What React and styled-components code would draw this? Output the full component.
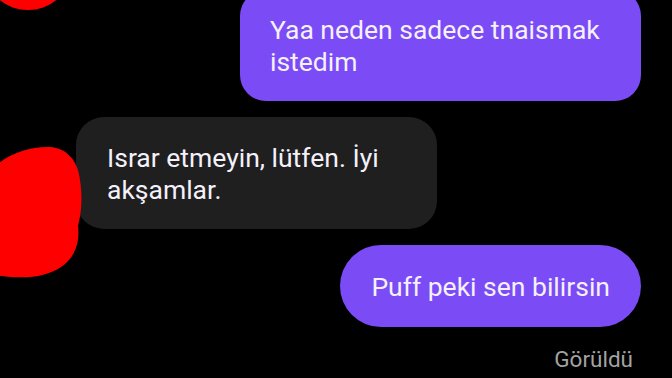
import React from "react";
import styled, { createGlobalStyle } from "styled-components";

const GlobalStyle = createGlobalStyle`
  html, body {
    margin: 0;
    padding: 0;
    background: #000;
    overflow: hidden;
  }
  *, *::before, *::after {
    box-sizing: border-box;
  }
  body {
    font-family: Roboto, "Noto Sans", "Liberation Sans", sans-serif;
  }
`;

const Screen = styled.div`
  position: relative;
  width: 672px;
  height: 378px;
  overflow: hidden;
  background: #000;
`;

const Thread = styled.div`
  display: flex;
  flex-direction: column;
  gap: 16px;
  margin-top: -10px;
  padding: 0 31px 0 0;
`;

const Bubble = styled.div`
  align-self: ${(props) => (props.mine ? "flex-end" : "flex-start")};
  margin-left: ${(props) => (props.mine ? "0" : "76px")};
  max-width: ${(props) => props.maxWidth || "none"};
  padding: ${(props) => props.pad || "24px 30px"};
  border-radius: ${(props) => props.radius || "26px"};
  background: ${(props) => (props.mine ? "#7b4bf6" : "#1f1f1f")};
  color: #f4f1fb;
  font-size: 26.5px;
  line-height: 32px;
`;

const Seen = styled.div`
  align-self: flex-end;
  margin-top: 4px;
  margin-right: 8px;
  color: #a3a3a3;
  font-size: 22.5px;
  line-height: 24px;
`;

const Scribble = styled.svg`
  position: absolute;
  left: 0;
  top: 0;
  pointer-events: none;
`;

export default function App() {
  return (
    <>
      <GlobalStyle />
      <Screen>
        <Thread>
          <Bubble mine maxWidth="401px" pad="24px 30px 23px">
            Yaa neden sadece tnaismak istedim
          </Bubble>
          <Bubble maxWidth="361px" pad="25px 31px 23px" radius="28px">
            Israr etmeyin, lütfen. İyi akşamlar.
          </Bubble>
          <Bubble mine pad="26px 31px 24px" radius="41px">
            Puff peki sen bilirsin
          </Bubble>
          <Seen>Görüldü</Seen>
        </Thread>
        <Scribble width="672" height="378" viewBox="0 0 672 378">
          <ellipse cx="28" cy="-24" rx="40" ry="34" fill="#ff0000" />
          <path
            d="M-10,172 C2,156 28,146 50,147 C66,148 78,160 80,180 C83,200 81,214 78,226 C80,242 75,258 61,267 C45,278 20,280 -10,274 Z"
            fill="#ff0000"
          />
        </Scribble>
      </Screen>
    </>
  );
}
